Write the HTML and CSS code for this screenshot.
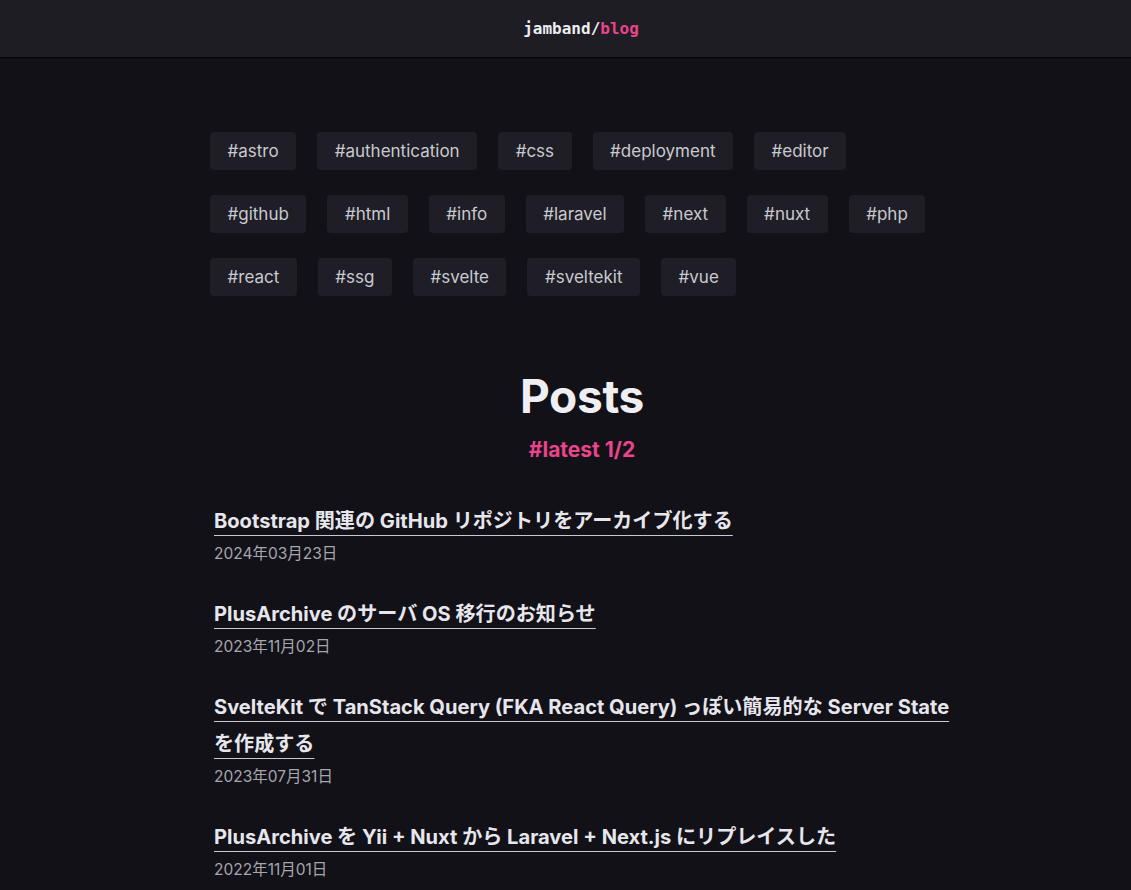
FILE: index.html
```html
<!DOCTYPE html>
<html lang="ja">
<head>
<meta charset="utf-8">
<title>jamband/blog</title>
<link rel="stylesheet" href="styles.css">
</head>
<body>
<header class="site-header">
  <a class="logo" href="#">jamband/<span class="logo-accent">blog</span></a>
</header>
<main class="container">
  <ul class="tags">
    <li><a class="tag" href="#">#astro</a></li>
    <li><a class="tag" href="#">#authentication</a></li>
    <li><a class="tag" href="#">#css</a></li>
    <li><a class="tag" href="#">#deployment</a></li>
    <li><a class="tag" href="#">#editor</a></li>
    <li><a class="tag" href="#">#github</a></li>
    <li><a class="tag" href="#">#html</a></li>
    <li><a class="tag" href="#">#info</a></li>
    <li><a class="tag" href="#">#laravel</a></li>
    <li><a class="tag" href="#">#next</a></li>
    <li><a class="tag" href="#">#nuxt</a></li>
    <li><a class="tag" href="#">#php</a></li>
    <li><a class="tag" href="#">#react</a></li>
    <li><a class="tag" href="#">#ssg</a></li>
    <li><a class="tag" href="#">#svelte</a></li>
    <li><a class="tag" href="#">#sveltekit</a></li>
    <li><a class="tag" href="#">#vue</a></li>
  </ul>
  <section class="posts">
    <h1 class="posts-title">Posts</h1>
    <p class="posts-sub">#latest 1/2</p>
    <ul class="post-list">
      <li class="post">
        <a class="post-link" href="#">Bootstrap 関連の GitHub リポジトリをアーカイブ化する</a>
        <div class="post-date">2024年03月23日</div>
      </li>
      <li class="post">
        <a class="post-link" href="#">PlusArchive のサーバ OS 移行のお知らせ</a>
        <div class="post-date">2023年11月02日</div>
      </li>
      <li class="post">
        <a class="post-link" href="#">SvelteKit で TanStack Query (FKA React Query) っぽい簡易的な Server State を作成する</a>
        <div class="post-date">2023年07月31日</div>
      </li>
      <li class="post">
        <a class="post-link" href="#">PlusArchive を Yii + Nuxt から Laravel + Next.js にリプレイスした</a>
        <div class="post-date">2022年11月01日</div>
      </li>
    </ul>
  </section>
</main>
</body>
</html>
```

FILE: styles.css
```css
* { box-sizing: border-box; }
html, body { margin: 0; padding: 0; }
body {
  background: #121118;
  color: #e4e4e9;
  font-family: Inter, "Noto Sans CJK JP", sans-serif;
  overflow: hidden;
}
a { color: inherit; text-decoration: none; }
ul { list-style: none; margin: 0; padding: 0; }

.site-header {
  height: 58px;
  background: #1e1d24;
  border-bottom: 1px solid #050507;
  display: flex;
  align-items: center;
  justify-content: center;
}
.logo {
  font-family: "DejaVu Sans Mono", monospace;
  font-weight: bold;
  font-size: 16px;
  color: #ececf1;
  padding-left: 31px;
}
.logo-accent { color: #e8458b; }

.container {
  width: 736px;
  margin: 0 0 0 214px;
  padding-top: 74px;
}

.tags {
  display: flex;
  flex-wrap: wrap;
  column-gap: 21px;
  row-gap: 25px;
  margin-left: -4px;
  width: 720px;
}
.tag {
  display: block;
  height: 38px;
  line-height: 38px;
  padding: 0 17.5px;
  background: #1f1e26;
  border-radius: 4px;
  font-size: 17px;
  color: #c9c9d1;
}

.posts { padding-top: 72px; }
.posts-title {
  margin: 0;
  text-align: center;
  font-size: 46px;
  font-weight: 700;
  line-height: 56px;
  color: #efeff3;
  letter-spacing: -0.3px;
}
.posts-sub {
  margin: 0;
  padding-top: 14px;
  text-align: center;
  font-size: 21px;
  font-weight: 700;
  color: #e8458b;
  line-height: 24px;
}
.post-list { padding-top: 41px; }
.post { margin-bottom: 31px; }
.post-link {
  font-size: 20.1px;
  font-weight: 700;
  line-height: 37px;
  color: #e6e6ec;
  text-decoration: underline;
  text-decoration-thickness: 1px;
  text-underline-offset: 7px;
  text-decoration-color: #c8c8d0;
}
.post-date {
  font-size: 15.5px;
  line-height: 22px;
  color: #a6a6ae;
  margin-top: 3px;
}
```
